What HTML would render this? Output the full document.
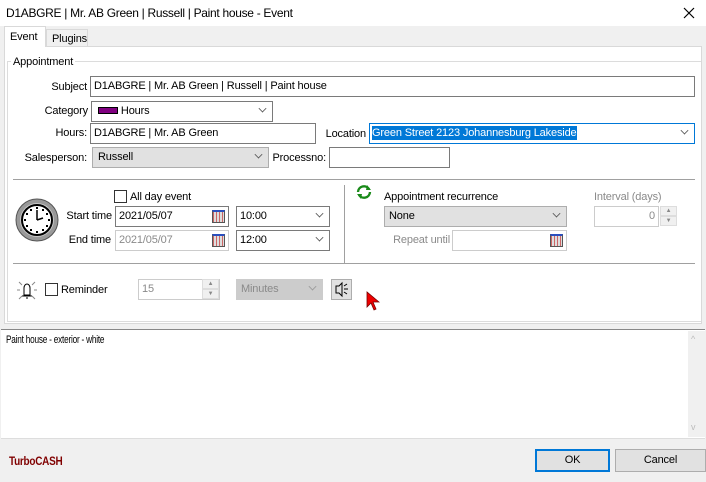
<!DOCTYPE html>
<html><head><style>
*{box-sizing:border-box;margin:0;padding:0}
body{width:706px;height:482px;background:#f0f0f0;font-family:"Liberation Sans",sans-serif;font-size:11px;letter-spacing:-0.15px;color:#000;position:relative;overflow:hidden}
.a{position:absolute;white-space:nowrap}
.in{position:absolute;background:#fff;border:1px solid #7a7a7a;height:21px;line-height:19px;padding-left:3px;overflow:hidden}
.dis{border-color:#ccc;color:#8a8a8a}
.gray{background:#e1e1e1;border-color:#adadad}
.chev{position:absolute;right:6px;width:7px;height:7px;border-right:1px solid #555;border-bottom:1px solid #555;transform:rotate(45deg) scale(.8);top:3px}
.lbl{position:absolute;white-space:nowrap;line-height:14px}
.r{text-align:right}
.cb{position:absolute;width:13px;height:13px;border:1px solid #333;background:#fff}
.cal{position:absolute;width:13px;height:13px;border:1px solid #555;background:repeating-linear-gradient(90deg,#c66 0 1px,#ddd 1px 3px);border-top:2px solid #2a4fbf}
.g{color:#8a8a8a}
</style></head><body>
<div class="a" style="left:0;top:0;width:706px;height:26px;background:#fff"></div>
<div class="a" style="left:6px;top:6px;font-size:12px;letter-spacing:-0.3px">D1ABGRE | Mr. AB Green | Russell | Paint house - Event</div>
<svg class="a" style="left:683px;top:7px" width="12" height="12"><path d="M1 1L11 11M11 1L1 11" stroke="#000" stroke-width="1.2"/></svg>
<div class="a" style="left:46px;top:29px;width:42px;height:17px;border:1px solid #d9d9d9;border-bottom:none;background:#f0f0f0;padding:3px 0 0 5px">Plugins</div>
<div class="a" style="left:4px;top:46px;width:698px;height:278px;background:#fff;border:1px solid #d9d9d9"></div>
<div class="a" style="left:4px;top:26px;width:42px;height:21px;border:1px solid #d9d9d9;border-bottom:none;background:#fff;padding:4px 0 0 5px">Event</div>
<div class="a" style="left:7px;top:61px;width:694px;height:261px;border:1px solid #dcdcdc;border-right:none"></div>
<div class="lbl" style="left:11px;top:55px;background:#fff;padding:0 2px">Appointment</div>
<div class="lbl r" style="left:0;width:87px;top:80px">Subject</div>
<div class="in" style="left:90px;top:76px;width:605px">D1ABGRE | Mr. AB Green | Russell | Paint house</div>
<div class="lbl r" style="left:0;width:88px;top:104px">Category</div>
<div class="in" style="left:91px;top:101px;width:182px;padding-left:6px"><span style="display:inline-block;width:20px;height:7px;background:#800080;border:1px solid #000;vertical-align:middle;margin-top:-2px"></span> Hours<div class="chev"></div></div>
<div class="lbl r" style="left:0;width:87px;top:126px">Hours:</div>
<div class="in" style="left:90px;top:123px;width:226px">D1ABGRE | Mr. AB Green</div>
<div class="lbl r" style="left:300px;width:66px;top:127px">Location</div>
<div class="in" style="left:369px;top:123px;width:326px;border-color:#0078d7;padding-left:2px"><span style="background:#0078d7;color:#fff;padding:1px 0">Green Street 2123 Johannesburg Lakeside</span><div class="chev"></div></div>
<div class="lbl r" style="left:0;width:87px;top:151px">Salesperson:</div>
<div class="in gray" style="left:92px;top:147px;width:177px;padding-left:5px">Russell<div class="chev"></div></div>
<div class="lbl r" style="left:260px;width:66px;top:151px">Processno:</div>
<div class="in" style="left:329px;top:147px;width:121px"></div>
<div class="a" style="left:13px;top:179px;width:682px;height:2px;border-top:1px solid #a0a0a0"></div>
<div class="a" style="left:344px;top:185px;width:2px;height:78px;border-left:1px solid #a0a0a0"></div>
<div class="a" style="left:13px;top:263px;width:682px;height:2px;border-top:1px solid #a0a0a0"></div>
<svg class="a" style="left:14px;top:197px" width="46" height="46"><circle cx="23" cy="23" r="21" fill="#999" stroke="#555"/><circle cx="23" cy="23" r="17" fill="#c8c8c8"/><circle cx="23" cy="23" r="15" fill="#fff" stroke="#000" stroke-width="2"/><g fill="#000"><rect x="22" y="10" width="2" height="2"/><rect x="22" y="34" width="2" height="2"/><rect x="10" y="22" width="2" height="2"/><rect x="34" y="22" width="2" height="2"/><rect x="28" y="12" width="2" height="2"/><rect x="16" y="12" width="2" height="2"/><rect x="28" y="32" width="2" height="2"/><rect x="16" y="32" width="2" height="2"/><rect x="12" y="16" width="2" height="2"/><rect x="32" y="16" width="2" height="2"/><rect x="12" y="28" width="2" height="2"/><rect x="32" y="28" width="2" height="2"/></g><path d="M23 23V13M23 23L29 21" stroke="#000" stroke-width="1.5"/></svg>
<div class="cb" style="left:114px;top:190px"></div><div class="lbl" style="left:130px;top:190px">All day event</div>
<div class="lbl r" style="left:50px;width:62px;top:209px">Start time</div>
<div class="in" style="left:115px;top:206px;width:114px">2021/05/07<div class="cal" style="left:96px;top:3px"></div></div>
<div class="in" style="left:236px;top:206px;width:94px">10:00<div class="chev"></div></div>
<div class="lbl r" style="left:50px;width:61px;top:233px">End time</div>
<div class="in dis" style="left:115px;top:230px;width:114px">2021/05/07<div class="cal" style="left:96px;top:3px"></div></div>
<div class="in" style="left:236px;top:230px;width:94px">12:00<div class="chev"></div></div>
<svg class="a" style="left:355px;top:184px" width="18" height="16"><path d="M3 8A6 6 0 0 1 14 5M15 8A6 6 0 0 1 4 11" stroke="#1a8a1a" stroke-width="2.4" fill="none"/><path d="M12 1L16 6L11 6Z M6 15L2 10L7 10Z" fill="#1a8a1a"/></svg>
<div class="lbl" style="left:384px;top:190px">Appointment recurrence</div>
<div class="in gray" style="left:384px;top:206px;width:183px;padding-left:4px">None<div class="chev"></div></div>
<div class="lbl g r" style="left:380px;width:70px;top:233px">Repeat until</div>
<div class="in dis" style="left:452px;top:230px;width:115px"><div class="cal" style="left:97px;top:3px"></div></div>
<div class="lbl g" style="left:594px;top:190px">Interval (days)</div>
<div class="in dis" style="left:594px;top:206px;width:65px;text-align:right;padding-right:3px">0</div>
<div class="a" style="left:660px;top:206px;width:17px;height:10px;background:#f0f0f0;border:1px solid #ddd;font-size:6px;text-align:center;color:#888;line-height:8px">▲</div>
<div class="a" style="left:660px;top:216px;width:17px;height:10px;background:#f0f0f0;border:1px solid #ddd;font-size:6px;text-align:center;color:#888;line-height:8px">▼</div>
<svg class="a" style="left:16px;top:279px" width="22" height="22"><path d="M8 16V9A3 4 0 0 1 14 9V16ZM6 17H16M10 19H12" stroke="#000" fill="none"/><path d="M3 3L6 6M19 3L16 6M1 11H4M21 11H18M3 20L6 17M19 20L16 17" stroke="#888"/></svg>
<div class="cb" style="left:45px;top:283px"></div><div class="lbl" style="left:61px;top:283px">Reminder</div>
<div class="in dis" style="left:138px;top:279px;width:82px">15</div>
<div class="a" style="left:202px;top:279px;width:17px;height:10px;background:#f0f0f0;border:1px solid #ddd;font-size:6px;text-align:center;color:#888;line-height:8px">▲</div>
<div class="a" style="left:202px;top:289px;width:17px;height:10px;background:#f0f0f0;border:1px solid #ddd;font-size:6px;text-align:center;color:#888;line-height:8px">▼</div>
<div class="in dis" style="left:236px;top:279px;width:87px;background:#ccc;padding-left:4px">Minutes<div class="chev" style="border-color:#999"></div></div>
<div class="a" style="left:331px;top:279px;width:21px;height:21px;background:#e1e1e1;border:1px solid #adadad"><svg width="19" height="19"><path d="M4 6H7L10 3V16L7 13H4Z" fill="none" stroke="#000"/><path d="M12 6L15 4M12 9H16M12 12L15 14" stroke="#000"/></svg></div>
<svg class="a" style="left:366px;top:291px" width="14" height="20"><path d="M1 1V16L5 12L8 19L10 18L7 11H13Z" fill="#e00" stroke="#700" stroke-width=".8"/></svg>
<div class="a" style="left:1px;top:329px;width:704px;height:110px;background:#fff;border-top:1px solid #888;border-bottom:1px solid #ddd"></div>
<div class="a" style="left:688px;top:331px;width:17px;height:106px;background:#f0f0f0"></div>
<div class="a" style="left:691px;top:334px;color:#bbb;font-size:9px">^</div>
<div class="a" style="left:691px;top:422px;color:#bbb;font-size:9px">v</div>
<div class="lbl" style="left:6px;top:333px;font-size:11px;letter-spacing:-0.3px;transform:scaleX(.75);transform-origin:0 0">Paint house - exterior - white</div>
<div class="a" style="left:9px;top:454px;font-weight:bold;color:#800000;font-size:12px;letter-spacing:-0.3px;transform:scaleX(.83);transform-origin:0 0">TurboCASH</div>
<div class="a" style="left:535px;top:449px;width:75px;height:23px;background:#e1e1e1;border:2px solid #0078d7;text-align:center;line-height:19px">OK</div>
<div class="a" style="left:615px;top:449px;width:91px;height:23px;background:#e1e1e1;border:1px solid #adadad;text-align:center;line-height:21px">Cancel</div>
</body></html>
